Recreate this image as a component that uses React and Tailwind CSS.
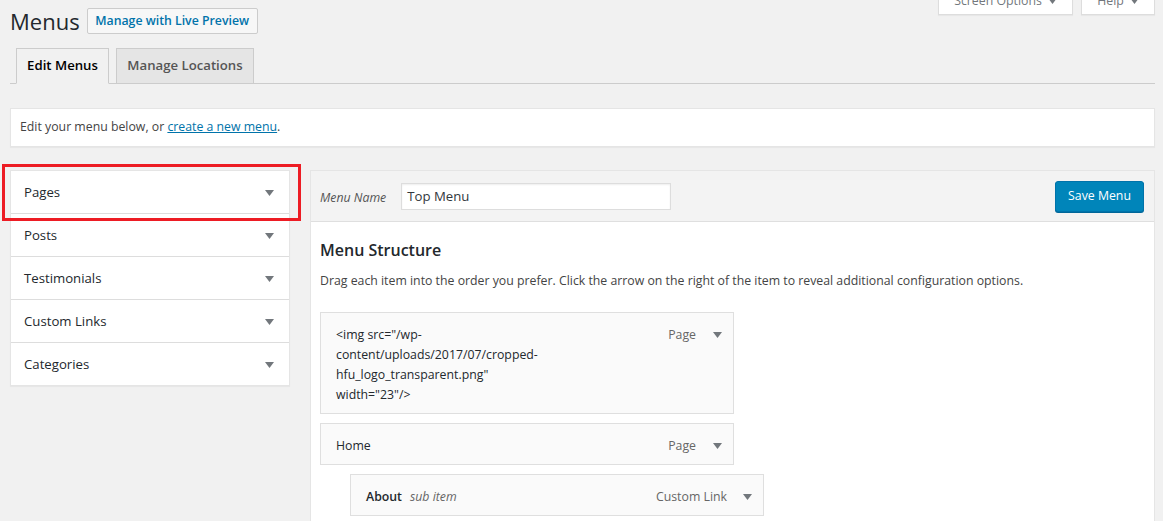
import React from "react";

const Arrow = ({ className = "" }) => (
  <svg width="9" height="6" viewBox="0 0 9 6" className={className}>
    <path d="M0 0 L9 0 L4.5 6 Z" fill="#72777c" />
  </svg>
);

const leftItems = ["Pages", "Posts", "Testimonials", "Custom Links", "Categories"];

export default function App() {
  return (
    <div
      className="relative min-h-[521px] w-[1163px] overflow-hidden bg-[#f1f1f1] text-[#444]"
      style={{ fontFamily: '"Open Sans", "Liberation Sans", Arial, sans-serif' }}
    >
      {/* Screen options / help tabs */}
      <div className="absolute right-[8px] top-[-13px] flex gap-[8px]">
        <div className="flex h-[28px] w-[135px] items-center justify-center gap-[6px] border border-[#ddd] bg-white text-[12.3px] text-[#72777c] shadow-[0_1px_1px_rgba(0,0,0,0.04)]">
          Screen Options <Arrow />
        </div>
        <div className="flex h-[28px] w-[74px] items-center justify-center gap-[6px] border border-[#ddd] bg-white text-[12.3px] text-[#72777c] shadow-[0_1px_1px_rgba(0,0,0,0.04)]">
          Help <Arrow />
        </div>
      </div>

      <div className="pl-[10px] pr-[8px]">
        {/* Title */}
        <div className="flex items-center pt-[8px]">
          <h1 className="text-[22px] leading-[26px] text-[#23282d]">Menus</h1>
          <div className="ml-[7px] flex h-[26px] w-[171px] items-center justify-center rounded-[2px] border border-[#ccc] bg-[#f7f7f7] text-[12.3px] font-semibold text-[#0073aa]">
            Manage with Live Preview
          </div>
        </div>

        {/* Tabs */}
        <div className="mt-[14px] flex items-end border-b border-[#ccc] pl-[6px]">
          <div className="-mb-px flex h-[36px] w-[93px] items-center justify-center border border-[#ccc] border-b-[#f1f1f1] bg-[#f1f1f1] text-[13.2px] font-semibold text-[#000]">
            Edit Menus
          </div>
          <div className="ml-[7px] flex h-[35px] w-[138px] items-center justify-center border border-b-0 border-[#ccc] bg-[#e5e5e5] text-[13.2px] font-semibold text-[#555]">
            Manage Locations
          </div>
        </div>

        {/* Notice */}
        <div className="mt-[24px] flex h-[39px] items-center border border-[#e5e5e5] bg-white px-[9px] text-[12.3px] text-[#444] shadow-[0_1px_1px_rgba(0,0,0,0.04)]">
          <span>
            Edit your menu below, or{" "}
            <span className="text-[#0073aa] underline">create a new menu</span>.
          </span>
        </div>

        {/* Main columns */}
        <div className="mt-[23px] flex items-start gap-[20px]">
          {/* Left accordion */}
          <div className="relative w-[280px] shrink-0">
            <div className="border border-[#e5e5e5] bg-white shadow-[0_1px_1px_rgba(0,0,0,0.04)]">
              {leftItems.map((it, i) => (
                <div
                  key={it}
                  className={`flex items-center justify-between pl-[13px] pr-[15px] pt-[1px] text-[13.2px] text-[#23282d] ${
                    i > 0 ? "h-[43px] border-t border-[#ddd]" : "h-[42px]"
                  }`}
                >
                  <span>{it}</span>
                  <Arrow />
                </div>
              ))}
            </div>
            <div className="pointer-events-none absolute left-[-8px] top-[-6px] h-[57px] w-[299px] border-[3px] border-[#ed1c24]" />
          </div>

          {/* Right panel */}
          <div className="flex-1 border border-[#e5e5e5] bg-white">
            <div className="flex h-[51px] items-center justify-between border-b border-[#dfdfdf] bg-[#f3f3f3] pl-[9px] pr-[10px]">
              <div className="flex items-center pt-[1px]">
                <span className="pt-[3px] text-[12.3px] italic text-[#555]">Menu Name</span>
                <div className="ml-[15px] flex h-[27px] w-[270px] items-center border border-[#ddd] bg-white px-[5px] text-[13.2px] text-[#32373c] shadow-[inset_0_1px_2px_rgba(0,0,0,0.07)]">
                  Top Menu
                </div>
              </div>
              <div className="flex h-[31px] w-[89px] items-center justify-center rounded-[3px] border border-[#0073aa] bg-[#0085ba] text-[12.3px] text-white shadow-[0_1px_0_#006799]">
                Save Menu
              </div>
            </div>
            <div className="px-[9px] pb-[10px]">
              <h3 className="mt-[17px] text-[16px] font-semibold leading-[22px] text-[#23282d]">
                Menu Structure
              </h3>
              <p className="mt-[10px] text-[12.3px] leading-[20px] text-[#444]">
                Drag each item into the order you prefer. Click the arrow on the right of the item to reveal additional configuration options.
              </p>

              <div className="mt-[21px] flex w-[414px] items-start justify-between border border-[#dfdfdf] bg-[#fafafa] pb-[8px] pl-[15px] pr-[11px] pt-[12px]">
                <div className="w-[218px] text-[12.3px] leading-[20px] text-[#23282d]">
                  &lt;img src="/wp-content/uploads/2017/07/cropped-hfu_logo_transparent.png" width="23"/&gt;
                </div>
                <div className="flex items-center gap-[17px] text-[12.3px] leading-[20px] text-[#666]">
                  <span>Page</span>
                  <Arrow />
                </div>
              </div>

              <div className="mt-[9px] flex w-[414px] items-center justify-between border border-[#dfdfdf] bg-[#fafafa] pb-[8px] pl-[15px] pr-[11px] pt-[12px]">
                <div className="text-[12.3px] leading-[20px] text-[#23282d]">Home</div>
                <div className="flex items-center gap-[17px] text-[12.3px] leading-[20px] text-[#666]">
                  <span>Page</span>
                  <Arrow />
                </div>
              </div>

              <div className="ml-[30px] mt-[9px] flex w-[414px] items-center justify-between border border-[#dfdfdf] bg-[#fafafa] pb-[8px] pl-[15px] pr-[11px] pt-[12px]">
                <div className="text-[12.3px] leading-[20px]">
                  <span className="font-semibold text-[#23282d]">About</span>
                  <span className="ml-[8px] italic text-[#666]">sub item</span>
                </div>
                <div className="flex items-center gap-[16px] text-[12.3px] leading-[20px] text-[#666]">
                  <span>Custom Link</span>
                  <Arrow />
                </div>
              </div>
            </div>
          </div>
        </div>
      </div>
    </div>
  );
}
